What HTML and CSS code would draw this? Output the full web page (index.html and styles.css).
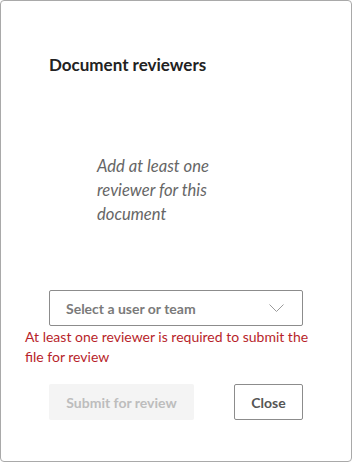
FILE: index.html
```html
<!DOCTYPE html>
<html lang="en">
<head>
    <meta charset="UTF-8">
    <title>Document reviewers</title>
    <link rel="stylesheet" href="styles.css">
</head>
<body>
    <div class="dialog">
        <h1 class="title">Document reviewers</h1>
        <p class="empty">Add at least one reviewer for this document</p>
        <div class="picker">
            <span class="placeholder">Select a user or team</span>
            <svg class="chevron" width="15" height="8" viewBox="0 0 15 8">
                <path d="M0.5 0.5 L7.5 7.5 L14.5 0.5" fill="none" stroke="#9a9a9a" stroke-width="1"/>
            </svg>
        </div>
        <div class="error">At least one reviewer is required to submit the file for review</div>
        <div class="actions">
            <button class="btn btn-submit" disabled>Submit for review</button>
            <button class="btn btn-close">Close</button>
        </div>
    </div>
</body>
</html>
```

FILE: styles.css
```css
body {
    margin: 0;
    font-family: Lato, "Open Sans", sans-serif;
    background: #fff;
}
.dialog {
    box-sizing: border-box;
    width: 352px;
    height: 462px;
    border: 1px solid #a9a9a9;
    border-radius: 4px;
    padding: 0 48px;
}
.title {
    margin: 54px 0 0;
    font-size: 17px;
    line-height: 20px;
    font-weight: 700;
    color: #222;
}
.empty {
    margin: 79px 0 0 48px;
    width: 125px;
    font-size: 16.6px;
    line-height: 24px;
    font-style: italic;
    color: #666;
}
.picker {
    box-sizing: border-box;
    margin-top: 64px;
    height: 36px;
    border: 1px solid #8c8c8c;
    border-radius: 2px;
    display: flex;
    align-items: center;
    justify-content: space-between;
    padding: 0 18px 0 16px;
}
.placeholder {
    font-size: 14px;
    font-weight: 700;
    color: #7a7a7a;
}
.chevron {
    display: block;
}
.error {
    margin: 1px -8px 0 -24px;
    font-size: 14px;
    line-height: 20px;
    color: #b81f2b;
}
.actions {
    margin-top: 17px;
    display: flex;
    justify-content: space-between;
}
.btn {
    box-sizing: border-box;
    height: 36px;
    padding: 0 16px;
    font-family: inherit;
    font-size: 14px;
    font-weight: 700;
    border-radius: 2px;
}
.btn-submit {
    width: 145px;
    background: #f4f4f4;
    border: none;
    color: #bdbdbd;
}
.btn-close {
    width: 69px;
    background: #fff;
    border: 1px solid #8c8c8c;
    color: #555;
}
```
